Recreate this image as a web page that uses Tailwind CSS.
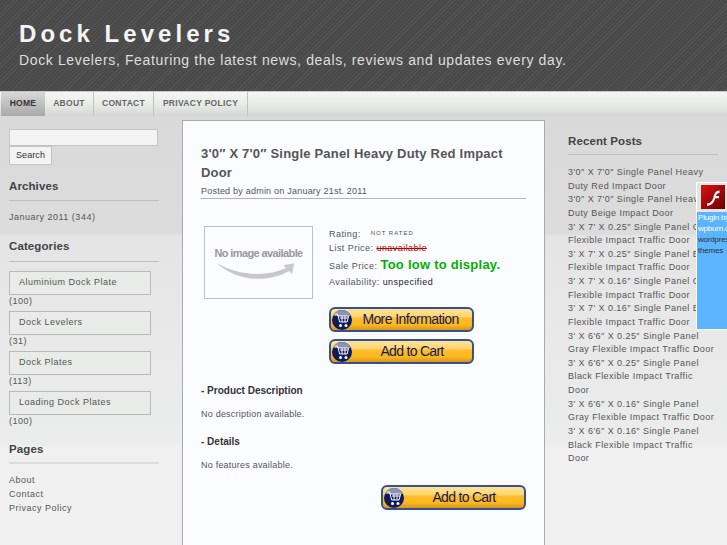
<!DOCTYPE html>
<html lang="en">
<head>
    <meta charset="UTF-8">
    <meta name="viewport" content="width=device-width, initial-scale=1.0">
    <title>Dock Levelers</title>
    <script src="https://cdn.jsdelivr.net/npm/@tailwindcss/browser@4"></script>
</head>
<body class="font-['Liberation_Sans',Arial,sans-serif] text-[9px] tracking-[0.5px] text-[#555] bg-[#f0f0f0]">
<div class="relative w-[727px] h-[545px] overflow-hidden">

    <!-- Header -->
    <header class="h-[91px] pt-[19px] pl-[19px] bg-[#4c4c4c] bg-[repeating-linear-gradient(135deg,#535353_0px,#535353_1px,#494949_1px,#494949_3px)]">
        <h1 class="text-[24px] leading-[30px] font-bold tracking-[4.05px] text-[#f4f4f4]">Dock Levelers</h1>
        <p class="mt-px text-[14px] leading-[20px] tracking-[0.63px] text-[#dedede]">Dock Levelers, Featuring the latest news, deals, reviews and updates every day.</p>
    </header>

    <!-- Nav -->
    <nav class="h-[25px] flex pl-px border-t border-[#c8c8c8] bg-gradient-to-b from-[#f4f6f4] via-[#e8ece8] to-[#d4d8d4] font-bold text-[8.5px] tracking-[0.3px] text-[#666] leading-[23px]">
        <a class="w-[44px] text-center text-[#333] bg-gradient-to-b from-[#d8d8d8] to-[#a8a8a8]">HOME</a>
        <a class="w-[49px] text-center border-r border-[#c0c4c0]">ABOUT</a>
        <a class="w-[60px] text-center border-r border-[#c0c4c0]">CONTACT</a>
        <a class="w-[94px] text-center border-r border-[#c0c4c0]">PRIVACY POLICY</a>
    </nav>

    <div class="flex h-[429px] bg-[linear-gradient(180deg,#d9d9d9_0px,#dcdcdc_118px,#e4e4e4_120px,#e8e8e8_205px,#ebecec_328px,#f0f0f0_330px)]">

        <!-- Left sidebar -->
        <aside class="w-[182px] pl-[9px] pt-[13px] shrink-0">
            <input type="text" class="block w-[149px] h-[17px] border border-[#c4c4c4] bg-[#f2f3f2]">
            <button class="block w-[43px] h-[19px] border border-[#c4c4c4] bg-[#f2f3f2] text-[#333] text-[9px] tracking-[0.1px]">Search</button>

            <h3 class="mt-[13px] text-[11.5px] leading-[16px] font-bold text-[#444] tracking-[0.1px]">Archives</h3>
            <div class="w-[150px] mt-[6px] border-t border-[#bfbfbf]"></div>
            <p class="mt-[10px] leading-[12px]">January 2011 (344)</p>

            <h3 class="mt-[15px] text-[11.5px] leading-[16px] font-bold text-[#444] tracking-[0.1px]">Categories</h3>
            <div class="w-[150px] mt-[7px] mb-[9px] border-t border-[#bfbfbf]"></div>
            <ul class="leading-[12px]">
                <li class="mb-[4px]"><a class="block w-[142px] h-[24px] pl-[9px] leading-[21px] border border-[#b8bab8] bg-[#e8ebe8]">Aluminium Dock Plate</a><span class="block">(100)</span></li>
                <li class="mb-[4px]"><a class="block w-[142px] h-[24px] pl-[9px] leading-[21px] border border-[#b8bab8] bg-[#e8ebe8]">Dock Levelers</a><span class="block">(31)</span></li>
                <li class="mb-[4px]"><a class="block w-[142px] h-[24px] pl-[9px] leading-[21px] border border-[#b8bab8] bg-[#e8ebe8]">Dock Plates</a><span class="block">(113)</span></li>
                <li class="mb-[4px]"><a class="block w-[142px] h-[24px] pl-[9px] leading-[21px] border border-[#b8bab8] bg-[#e8ebe8]">Loading Dock Plates</a><span class="block">(100)</span></li>
            </ul>

            <h3 class="mt-[14px] text-[11.5px] leading-[16px] font-bold text-[#444] tracking-[0.1px]">Pages</h3>
            <div class="w-[150px] mt-[5px] mb-[9px] border-t-2 border-[#dcdcdc]"></div>
            <ul class="leading-[14px]">
                <li>About</li>
                <li>Contact</li>
                <li>Privacy Policy</li>
            </ul>
        </aside>

        <!-- Main post -->
        <main class="w-[363px] h-[430px] mt-[4px] px-[18px] pt-[23px] border border-[#aaa] bg-[#fbfcff] shrink-0 tracking-[0.22px]">
            <h2 class="text-[13px] leading-[19px] font-bold text-[#555] tracking-[0.2px]">3'0″ X 7'0″ Single Panel Heavy Duty Red Impact Door</h2>
            <p class="mt-[3px] pb-px leading-[12px] border-b border-[#b4b4b8] text-[#555]">Posted by admin on January 21st. 2011</p>

            <div class="flex mt-[27px]">
                <div class="w-[109px] h-[73px] ml-[3px] mr-[16px] border border-[#c0c0c0] flex flex-col items-center shrink-0">
                    <span class="mt-[19px] text-[11px] leading-[14px] font-bold tracking-[-0.6px] text-[#999]">No image available</span>
                    <svg class="mt-[2px] mr-[6px]" width="80" height="19" viewBox="0 0 82 19"><path d="M1 1 C22 13 50 16 72 6 L69 3 L80 1 L78 12 L75 9 C52 22 20 19 1 1Z" fill="#c8c8c8"/></svg>
                </div>
                <div class="text-[#555] tracking-[0.45px]">
                    <p class="leading-[15px]">Rating: <span class="ml-[7px] text-[6px] tracking-[1px] align-[2px]">NOT RATED</span></p>
                    <p class="leading-[13px]">List Price: <span class="text-[#b00] line-through">unavailable</span></p>
                    <p class="leading-[19px]">Sale Price: <span class="text-[13px] font-bold text-[#00b000] tracking-[0.25px]">Too low to display.</span></p>
                    <p class="leading-[12px]">Availability: <span class="text-[#222]">unspecified</span></p>

                    <a class="mt-[19px] flex items-center w-[145px] h-[25px] border-2 border-[#35528f] rounded-[6px] bg-[linear-gradient(180deg,#ffe39a_0%,#ffd670_35%,#fdbd2a_45%,#fbb920_75%,#d9951a_100%)]">
                        <svg class="ml-[1px] shrink-0" width="20" height="20" viewBox="0 0 20 20"><circle cx="10" cy="10" r="10" fill="#101a5c"/><path d="M10 0a10 10 0 0 1 9 6H1a10 10 0 0 1 9-6Z" fill="#8d93b5"/><path d="M3 4h2.5l2.2 8h7.4l1.500-6H6M8 8h8M10 6v6M13 6v6" fill="none" stroke="#fff" stroke-width="1"/><circle cx="8.500" cy="15.500" r="1.500" fill="#fff"/><circle cx="14" cy="15.500" r="1.500" fill="#fff"/></svg>
                        <span class="flex-1 text-center text-[14px] tracking-[-0.6px] text-[#131a5c] pr-[3px]">More Information</span>
                    </a>
                    <a class="mt-[7px] flex items-center w-[145px] h-[25px] border-2 border-[#35528f] rounded-[6px] bg-[linear-gradient(180deg,#ffe39a_0%,#ffd670_35%,#fdbd2a_45%,#fbb920_75%,#d9951a_100%)]">
                        <svg class="ml-[1px] shrink-0" width="20" height="20" viewBox="0 0 20 20"><circle cx="10" cy="10" r="10" fill="#101a5c"/><path d="M10 0a10 10 0 0 1 9 6H1a10 10 0 0 1 9-6Z" fill="#8d93b5"/><path d="M3 4h2.5l2.2 8h7.4l1.500-6H6M8 8h8M10 6v6M13 6v6" fill="none" stroke="#fff" stroke-width="1"/><circle cx="8.500" cy="15.500" r="1.500" fill="#fff"/><circle cx="14" cy="15.500" r="1.500" fill="#fff"/></svg>
                        <span class="flex-1 text-center text-[14px] tracking-[-0.7px] text-[#131a5c]">Add to Cart</span>
                    </a>
                </div>
            </div>

            <h4 class="mt-[21px] font-bold text-[#333] text-[10px] leading-[12px] tracking-[0px]">- Product Description</h4>
            <p class="mt-[11px] leading-[12px]">No description available.</p>
            <h4 class="mt-[16px] font-bold text-[#333] text-[10px] leading-[12px] tracking-[0px]">- Details</h4>
            <p class="mt-[11px] leading-[12px]">No features available.</p>

            <a class="mt-[14px] ml-auto flex items-center w-[145px] h-[25px] border-2 border-[#35528f] rounded-[6px] bg-[linear-gradient(180deg,#ffe39a_0%,#ffd670_35%,#fdbd2a_45%,#fbb920_75%,#d9951a_100%)]">
                <svg class="ml-[1px] shrink-0" width="20" height="20" viewBox="0 0 20 20"><circle cx="10" cy="10" r="10" fill="#101a5c"/><path d="M10 0a10 10 0 0 1 9 6H1a10 10 0 0 1 9-6Z" fill="#8d93b5"/><path d="M3 4h2.5l2.2 8h7.4l1.500-6H6M8 8h8M10 6v6M13 6v6" fill="none" stroke="#fff" stroke-width="1"/><circle cx="8.500" cy="15.500" r="1.500" fill="#fff"/><circle cx="14" cy="15.500" r="1.500" fill="#fff"/></svg>
                <span class="flex-1 text-center text-[14px] tracking-[-0.7px] text-[#131a5c]">Add to Cart</span>
            </a>
        </main>

        <!-- Right sidebar -->
        <aside class="flex-1 pl-[23px] pt-[17px]">
            <h3 class="text-[11.5px] leading-[16px] font-bold text-[#444] tracking-[0.1px]">Recent Posts</h3>
            <div class="w-[150px] mt-[5px] mb-[11px] border-t border-[#bfbfbf]"></div>
            <ul class="w-[150px] leading-[13.62px] tracking-[0.45px]">
                <li>3'0″ X 7'0″ Single Panel Heavy Duty Red Impact Door</li>
                <li>3'0″ X 7'0″ Single Panel Heavy Duty Beige Impact Door</li>
                <li>3' X 7' X 0.25″ Single Panel Gray Flexible Impact Traffic Door</li>
                <li>3' X 7' X 0.25″ Single Panel Black Flexible Impact Traffic Door</li>
                <li>3' X 7' X 0.16″ Single Panel Gray Flexible Impact Traffic Door</li>
                <li>3' X 7' X 0.16″ Single Panel Black Flexible Impact Traffic Door</li>
                <li>3' X 6'6″ X 0.25″ Single Panel Gray Flexible Impact Traffic Door</li>
                <li>3' X 6'6″ X 0.25″ Single Panel Black Flexible Impact Traffic<br>Door</li>
                <li>3' X 6'6″ X 0.16″ Single Panel Gray Flexible Impact Traffic Door</li>
                <li>3' X 6'6″ X 0.16″ Single Panel Black Flexible Impact Traffic<br>Door</li>
            </ul>
        </aside>
    </div>

    <!-- Flash plugin widget -->
    <div class="absolute left-[696px] top-[182px] w-[31px] h-[148px] bg-[#5ab4fe] border border-white border-r-0 overflow-hidden text-[8px] leading-[11px] tracking-[-0.2px] whitespace-nowrap">
        <div class="h-[29px] bg-[#e4e4e4] pl-[4px] pt-[2px]">
            <svg width="24" height="24" viewBox="0 0 24 24"><defs><linearGradient id="flashRed" x1="0" y1="0" x2="1" y2="1"><stop offset="0" stop-color="#d81414"/><stop offset="1" stop-color="#6e0000"/></linearGradient></defs><rect width="24" height="24" fill="url(#flashRed)"/><path d="M6 18.500c4 0 5.500-3 6.500-6.500 1-3.600 2.300-6.500 6-6.500v2.400c-2 0-3 1.300-3.600 3h3.100v2.400h-3.800c-1.200 4-3 7.400-8.200 7.400z" fill="#fff"/></svg>
        </div>
        <p class="pl-[1px] text-white">Plugin by</p>
        <p class="pl-[1px] text-white">wpburn.com</p>
        <p class="pl-[1px] text-[#333]">wordpress</p>
        <p class="pl-[1px] text-[#333]">themes</p>
    </div>
</div>
</body>
</html>
